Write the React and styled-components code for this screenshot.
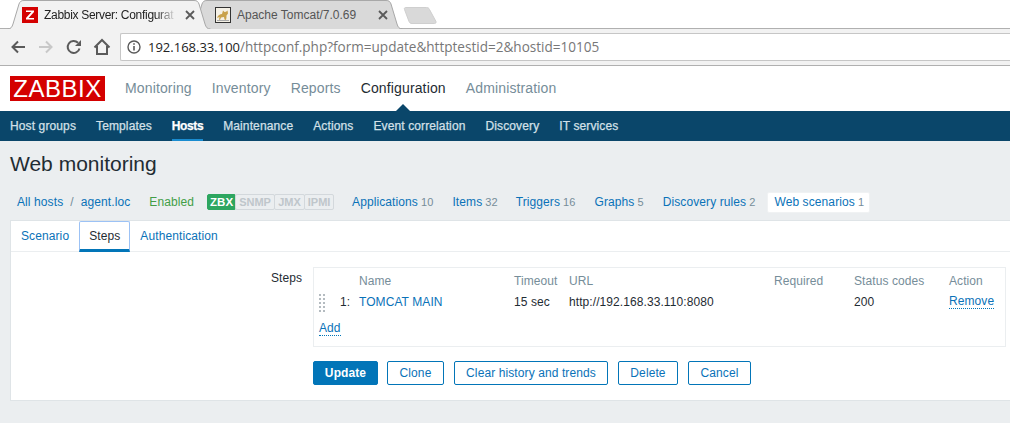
import React from 'react';
import styled, { createGlobalStyle } from 'styled-components';

const Global = createGlobalStyle`
  html, body { margin: 0; padding: 0; background: #ebeef0; }
  body { font-family: "Liberation Sans", Arial, sans-serif; font-size: 12px; color: #1f2c33; overflow: hidden; }
  * { box-sizing: border-box; }
`;

const Page = styled.div`width: 1010px; height: 423px; overflow: hidden; display: flex; flex-direction: column;`;

const TabStrip = styled.div`height: 29px; background: #fff; border-bottom: 1px solid #b0b0b0; display: flex; align-items: flex-start; padding-left: 7px; flex: none;`;
const BrowserTab = styled.div`
  position: relative; width: ${p => p.$w}px; height: 29px; flex: none; margin-left: ${p => p.$ml || 0}px;
  display: flex; align-items: center; padding: 0 0 0 ${p => p.$pl}px; z-index: ${p => p.$z};
  color: ${p => p.$c};
`;
const TabShape = styled.svg`position: absolute; left: 0; top: 0; z-index: -1;`;
const TabLabel = styled.span`
  width: ${p => p.$w}px; white-space: nowrap; overflow: hidden; margin-left: 6px; font-size: 12px;
  letter-spacing: ${p => p.$fade ? '-.3px' : '0'};
  ${p => p.$fade && 'mask-image: linear-gradient(to right, #000 84%, transparent 100%);'}
`;
const TabClose = styled.svg`margin-left: 8px; flex: none;`;
const NewTab = styled.svg`flex: none; margin: 6px 0 0 0;`;

const Toolbar = styled.div`height: 37px; background: #f2f2f2; border-bottom: 1px solid #b0b0b0; display: flex; align-items: center; padding: 0 0 1px 10px; flex: none;`;
const NavIcon = styled.svg`flex: none; margin-right: ${p => p.$mr}px;`;
const Omnibox = styled.div`
  flex: 1; height: 28px; background: #fff; border: 1px solid #c6c6c6; border-right: none; border-radius: 2px 0 0 2px;
  display: flex; align-items: center; padding-left: 6px; color: #777; font-family: "Open Sans", "Liberation Sans", sans-serif;
  margin-left: 9px; white-space: nowrap;
`;
const Host = styled.span`color: #222; margin-left: 7px; font-size: 13px;`;
const UrlPath = styled.span`font-size: 13.55px;`;

const Header = styled.header`height: 45px; background: #fff; display: flex; align-items: center; padding: 0 0 0 10px; flex: none;`;
const Logo = styled.div`
  width: 95px; height: 25px; background: #d40000; color: #fff; display: flex; align-items: center; justify-content: center;
  font-size: 24px; letter-spacing: .5px; margin-right: 10px; line-height: 1;
`;
const TopItem = styled.a`font-size: 14px; letter-spacing: .14px; padding: 0 10px 2px; color: ${p => p.$on ? '#1f2c33' : '#768d99'}; position: relative;
  &::after { content: ""; display: ${p => p.$on ? 'block' : 'none'}; position: absolute; left: 50%; margin-left: -8px; top: 24px; border: 8px solid transparent; border-top: 0; border-bottom-color: #0a466a; }
`;

const SubNav = styled.nav`height: 30px; background: #0a466a; display: flex; flex: none;`;
const SubItem = styled.a`
  margin: 0 0 0 ${p => p.$ml}px; height: 30px; display: flex; align-items: center; padding-top: ${p => p.$on ? 2 : 0}px; font-size: 12px;
  letter-spacing: ${p => p.$on ? '-.4px' : '.12px'};
  color: ${p => p.$on ? '#fff' : '#d4e0e8'}; font-weight: ${p => p.$on ? 700 : 400};
  border-bottom: ${p => p.$on ? '2px solid #1a8cd0' : 'none'};
  -webkit-text-stroke: .25px currentColor;
`;

const Title = styled.h1`margin: 0; font-weight: 400; font-size: 21px; color: #1f2c33; padding: 11px 10px 0; height: 41px; line-height: 24px; flex: none;`;

const Crumbs = styled.div`height: 38px; display: flex; align-items: center; padding: 2px 0 0 17px; flex: none; white-space: nowrap; letter-spacing: .1px;`;
const Link = styled.a`color: #0a72b8; margin-left: ${p => p.$ml || 0}px; ${p => p.$dot && 'border-bottom: 1px dotted #0275b8; line-height: 13px; display: inline-block;'}`;
const Count = styled.span`color: #768d99; font-size: 11px; margin-left: 3px;`;
const Sep = styled.span`color: #768d99; margin: 0 7px 0 7px;`;
const Enabled = styled.span`color: #429e47; margin-left: 19px;`;
const Avail = styled.div`display: flex; margin-left: 13px; height: 16px; font-size: 11px; font-weight: 700; letter-spacing: 0;`;
const AvailBox = styled.span`
  display: flex; align-items: center; justify-content: center; width: ${p => p.$w}px;
  background: ${p => p.$on ? '#2da660' : '#ebeef0'}; color: ${p => p.$on ? '#fff' : '#bfc6cb'};
  border: 1px solid ${p => p.$on ? '#2da660' : '#d3d8dc'};
  margin-left: ${p => p.$on ? 0 : -1}px; border-radius: 2px; font-size: ${p => p.$on ? 11.5 : 11}px;
`;
const CurrentCrumb = styled.span`display: flex; align-items: center; background: #fff; height: 21px; padding: 0 5px 0 6px; margin-left: 12px; border-radius: 2px; border: 1px solid #f0f2f3;`;

const Card = styled.section`margin: 0 0 0 10px; background: #fff; border: 1px solid #dfe4e7; border-right: none; height: 181px; flex: none; display: flex; flex-direction: column;`;
const Tabs = styled.div`height: 31px; border-bottom: 1px solid #ebeef0; display: flex; flex: none; letter-spacing: .1px;`;
const FormTab = styled.a`
  height: 31px; padding: 0 10px 2px; display: flex; align-items: center; color: ${p => p.$on ? '#1f2c33' : '#0a72b8'};
  ${p => p.$on && `border: 1px solid #9cc2f5; border-bottom: 3px solid #0275b8; border-radius: 2px 2px 0 0; padding: 0 9px; margin: 0;`}
`;
const Form = styled.div`display: grid; grid-template-columns: 291px 1fr; padding-top: 15px; column-gap: 11px; letter-spacing: .08px;`;
const FieldLabel = styled.div`text-align: right; padding-top: 4px; color: #1f2c33;`;
const StepsBox = styled.div`border: 1px solid #ebeef0; height: 80px; width: 693px;`;
const StepsTable = styled.table`border-collapse: collapse; table-layout: fixed; width: 692px; margin-top: 2px;`;
const Th = styled.th`font-weight: 400; color: #768d99; text-align: left; padding: 0; height: 21px; width: ${p => p.$w}px;`;
const Td = styled.td`padding: 0; height: 21px; text-align: ${p => p.$r ? 'right' : 'left'}; padding-right: ${p => p.$r ? 9 : 0}px;`;
const Grip = styled.div`
  width: 6px; height: 18px; margin: 3px 0 0 5px;
  background-image: linear-gradient(#b4bbc0 2px, transparent 2px); background-size: 100% 4px;
  mask-image: linear-gradient(to right, #000 2px, transparent 2px, transparent 4px, #000 4px);
`;
const AddRow = styled.div`padding: 0 0 0 5px; margin-top: 9px;`;
const Buttons = styled.div`display: flex; margin: 14px 0 0 0; grid-column: 2;`;
const Btn = styled.button`
  height: 24px; padding: 0; font: 12px "Liberation Sans", Arial, sans-serif; letter-spacing: .1px; border-radius: 2px;
  border: 1px solid #0275b8; background: ${p => p.$primary ? '#0275b8' : '#fff'}; color: ${p => p.$primary ? '#fff' : '#0a72b8'};
  font-weight: ${p => p.$primary ? 700 : 400}; width: ${p => p.$w}px; margin-right: ${p => p.$mr}px;
`;

const tabPath = w => `M0.5 29 C4 29 5 27 6 24 L12 4 C13 1.5 14 0.5 17 0.5 L${w - 17} 0.5 C${w - 14} 0.5 ${w - 13} 1.5 ${w - 12} 4 L${w - 6} 24 C${w - 5} 27 ${w - 4} 29 ${w - 0.5} 29`;

const Tab = ({ w, fill, stroke, children, ...rest }) => (
  <BrowserTab $w={w} {...rest}>
    <TabShape width={w} height="29"><path d={tabPath(w)} fill={fill} stroke={stroke} /></TabShape>
    {children}
  </BrowserTab>
);

const Close = () => (
  <TabClose width="10" height="10" viewBox="0 0 10 10"><path d="M1 1 9 9M9 1 1 9" stroke="#5a5a5a" strokeWidth="1.8" /></TabClose>
);

export default function App() {
  const sub = [['Host groups', 10], ['Templates', 20], ['Hosts', 20, true], ['Maintenance', 20], ['Actions', 20], ['Event correlation', 20], ['Discovery', 20], ['IT services', 20]];
  return (
    <Page>
      <Global />
      <TabStrip>
        <Tab w={204} $z={2} $pl={15} $c="#222" fill="#f2f2f2" stroke="#a8a8a8">
          <svg width="16" height="16" viewBox="0 0 16 16" style={{ flex: 'none' }}>
            <rect width="16" height="16" fill="#d40000" />
            <path d="M4 3.500h8v1.600L6.600 11H12v1.600H4v-1.600L9.400 5.100H4z" fill="#fff" />
          </svg>
          <TabLabel $w={133} $fade>Zabbix Server: Configurat</TabLabel>
          <Close />
        </Tab>
        <Tab w={213} $ml={-21} $z={1} $pl={25} $c="#555" fill="#d9d9d9" stroke="#a8a8a8">
          <svg width="16" height="16" viewBox="0 0 16 16" style={{ flex: 'none' }}>
            <rect x=".5" y=".5" width="15" height="15" fill="#f5f1e6" stroke="#333" />
            <path d="M2 11c1-3 3-4 5-4l1-3.500 1.500 1.500 1.500-.2L12.500 3.500l.5 3-1.500 2c0 1.500 0 3-.5 4.500l-1.500-.5-.5-2.500-3 .5-1 2.500-1-.5.500-2.500z" fill="#c9a24b" />
            <path d="M2 13.500h12" stroke="#a9a9a9" />
          </svg>
          <TabLabel $w={133}>Apache Tomcat/7.0.69</TabLabel>
          <Close />
        </Tab>
        <NewTab width="35" height="19" viewBox="0 0 35 19"><path d="M2.500 1.500h21c1.500 0 2.500.6 3 2l6.500 12c.4 1-.2 2-1.500 2H9c-1.500 0-2.500-.6-3-2L1.500 3.500c-.4-1 0-2 1-2z" fill="#d9d9d9" stroke="#cfcfcf" /></NewTab>
      </TabStrip>
      <Toolbar>
        <NavIcon $mr={12} width="16" height="16" viewBox="0 0 16 16"><path d="M15 8H2.500M8 2.500 2.500 8 8 13.500" fill="none" stroke="#5a5a5a" strokeWidth="2" /></NavIcon>
        <NavIcon $mr={12} width="16" height="16" viewBox="0 0 16 16"><path d="M1 8h12.500M8 2.500 13.500 8 8 13.500" fill="none" stroke="#c8c8c8" strokeWidth="2" /></NavIcon>
        <NavIcon $mr={11} width="16" height="16" viewBox="0 0 16 16"><path d="M13.500 9.500A6 6 0 1 1 12 3.800" fill="none" stroke="#5a5a5a" strokeWidth="2" /><path d="M15 1v6H9z" fill="#5a5a5a" /></NavIcon>
        <NavIcon $mr={0} width="18" height="18" viewBox="0 0 18 18"><path d="M1.500 9.500 9 2l7.500 7.500M4 8v8h10V8" fill="none" stroke="#5a5a5a" strokeWidth="2" /></NavIcon>
        <Omnibox>
          <svg width="14" height="14" viewBox="0 0 14 14"><circle cx="7" cy="7" r="6" fill="none" stroke="#5a5a5a" strokeWidth="1.400" /><path d="M7 6v4.500M7 3.200v1.600" stroke="#5a5a5a" strokeWidth="1.600" /></svg>
          <Host>192.168.33.100</Host><UrlPath>/httpconf.php?form=update&amp;httptestid=2&amp;hostid=10105</UrlPath>
        </Omnibox>
      </Toolbar>
      <Header>
        <Logo>ZABBIX</Logo>
        <TopItem>Monitoring</TopItem>
        <TopItem>Inventory</TopItem>
        <TopItem>Reports</TopItem>
        <TopItem $on>Configuration</TopItem>
        <TopItem>Administration</TopItem>
      </Header>
      <SubNav>
        {sub.map(([t, ml, on]) => <SubItem key={t} $ml={ml} $on={on}>{t}</SubItem>)}
      </SubNav>
      <Title>Web monitoring</Title>
      <Crumbs>
        <Link>All hosts</Link><Sep>/</Sep><Link>agent.loc</Link>
        <Enabled>Enabled</Enabled>
        <Avail>
          <AvailBox $on $w={29}>ZBX</AvailBox><AvailBox $w={40}>SNMP</AvailBox><AvailBox $w={31}>JMX</AvailBox><AvailBox $w={30}>IPMI</AvailBox>
        </Avail>
        <Link $ml={18}>Applications<Count>10</Count></Link>
        <Link $ml={19}>Items<Count>32</Count></Link>
        <Link $ml={18}>Triggers<Count>16</Count></Link>
        <Link $ml={19}>Graphs<Count>5</Count></Link>
        <Link $ml={19}>Discovery rules<Count>2</Count></Link>
        <CurrentCrumb><Link>Web scenarios</Link><Count>1</Count></CurrentCrumb>
      </Crumbs>
      <Card>
        <Tabs>
          <FormTab>Scenario</FormTab>
          <FormTab $on>Steps</FormTab>
          <FormTab>Authentication</FormTab>
        </Tabs>
        <Form>
          <FieldLabel>Steps</FieldLabel>
          <StepsBox>
            <StepsTable>
              <thead><tr>
                <Th $w={26} /><Th $w={19} /><Th $w={155}>Name</Th><Th $w={55}>Timeout</Th><Th $w={205}>URL</Th><Th $w={80}>Required</Th><Th $w={95}>Status codes</Th><Th>Action</Th>
              </tr></thead>
              <tbody><tr>
                <Td><Grip /></Td><Td $r>1:</Td><Td><Link>TOMCAT MAIN</Link></Td><Td>15 sec</Td><Td>http://192.168.33.110:8080</Td><Td /><Td>200</Td><Td><Link $dot>Remove</Link></Td>
              </tr></tbody>
            </StepsTable>
            <AddRow><Link $dot>Add</Link></AddRow>
          </StepsBox>
          <Buttons>
            <Btn $primary $w={65} $mr={9}>Update</Btn><Btn $w={57} $mr={10}>Clone</Btn><Btn $w={154} $mr={10}>Clear history and trends</Btn><Btn $w={60} $mr={10}>Delete</Btn><Btn $w={63} $mr={0}>Cancel</Btn>
          </Buttons>
        </Form>
      </Card>
    </Page>
  );
}
